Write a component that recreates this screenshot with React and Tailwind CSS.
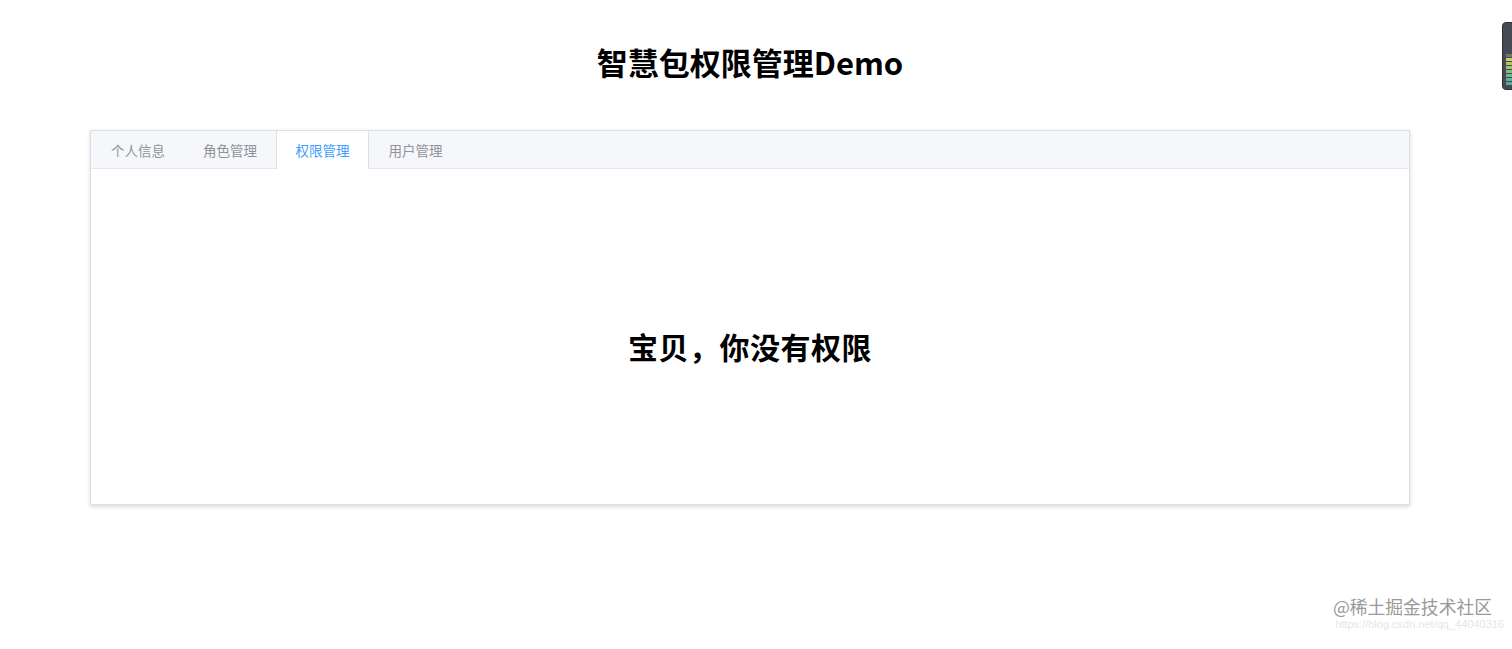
import { useState } from "react";

const tabs = [
  { label: "个人信息", width: "w-[93px]" },
  { label: "角色管理", width: "w-[92px]" },
  { label: "权限管理", width: "w-[93px]" },
  { label: "用户管理", width: "w-[93px]" },
];

export default function App() {
  const [active, setActive] = useState(2);

  return (
    <div
      className="relative h-[649px] w-full overflow-hidden bg-white"
      style={{ fontFamily: '"Microsoft YaHei", "Noto Sans CJK SC", "Noto Sans", sans-serif' }}
    >
      <div className="w-[1500px]">
        <h1 className="pt-[38px] text-center text-[31px] font-bold leading-[48px] text-black">
          智慧包权限管理Demo
        </h1>

        <div className="mx-[90px] mt-[44px] border border-[#dcdfe6] bg-white shadow-[0_2px_4px_rgba(0,0,0,0.12),0_0_6px_rgba(0,0,0,0.04)]">
          <div className="flex h-[38px] border-b border-[#e4e7ed] bg-[#f5f7fa]">
            {tabs.map((tab, i) => (
              <button
                key={tab.label}
                type="button"
                onClick={() => setActive(i)}
                className={[
                  "-mb-px flex h-[38px] items-center justify-center border-x text-[13.5px]",
                  tab.width,
                  i === active
                    ? "border-[#dcdfe6] bg-white text-[#409eff]"
                    : "border-transparent text-[#909399]",
                  i === 0 ? "pl-[1px]" : "",
                ].join(" ")}
              >
                {tab.label}
              </button>
            ))}
          </div>

          <div className="flex h-[335px] items-center justify-center pt-[20px]">
            <h2 className="text-[30px] font-bold tracking-[0.5px] text-black">宝贝，你没有权限</h2>
          </div>
        </div>
      </div>

      {/* watermark */}
      <div className="absolute bottom-[18px] right-[20px] flex flex-col items-end">
        <span className="text-[17.8px] leading-[22px] text-[#999999]">@稀土掘金技术社区</span>
        <span
          className="mr-[-12px] text-[11px] leading-[14px] text-[#e6e6e6]"
          style={{ fontFamily: '"Liberation Sans", sans-serif' }}
        >
          https://blog.csdn.net/qq_44040316
        </span>
      </div>

      {/* side widget peeking in at the right edge */}
      <div className="absolute right-[-6px] top-[22px] flex h-[68px] w-[16px] flex-col justify-end gap-[1px] rounded-[4px] border border-[#2b2f36] bg-[#454a55] px-[3px] pb-[4px]">
        <div className="h-[3px] bg-[#6b7a6a]" />
        <div className="h-[3px] bg-[#c9cf6a]" />
        <div className="h-[3px] bg-[#b3c764]" />
        <div className="h-[3px] bg-[#9cc46c]" />
        <div className="h-[3px] bg-[#7fbf7e]" />
        <div className="h-[3px] bg-[#6cb98e]" />
        <div className="h-[3px] bg-[#5fb39b]" />
        <div className="h-[3px] bg-[#58aa9c]" />
      </div>
    </div>
  );
}
